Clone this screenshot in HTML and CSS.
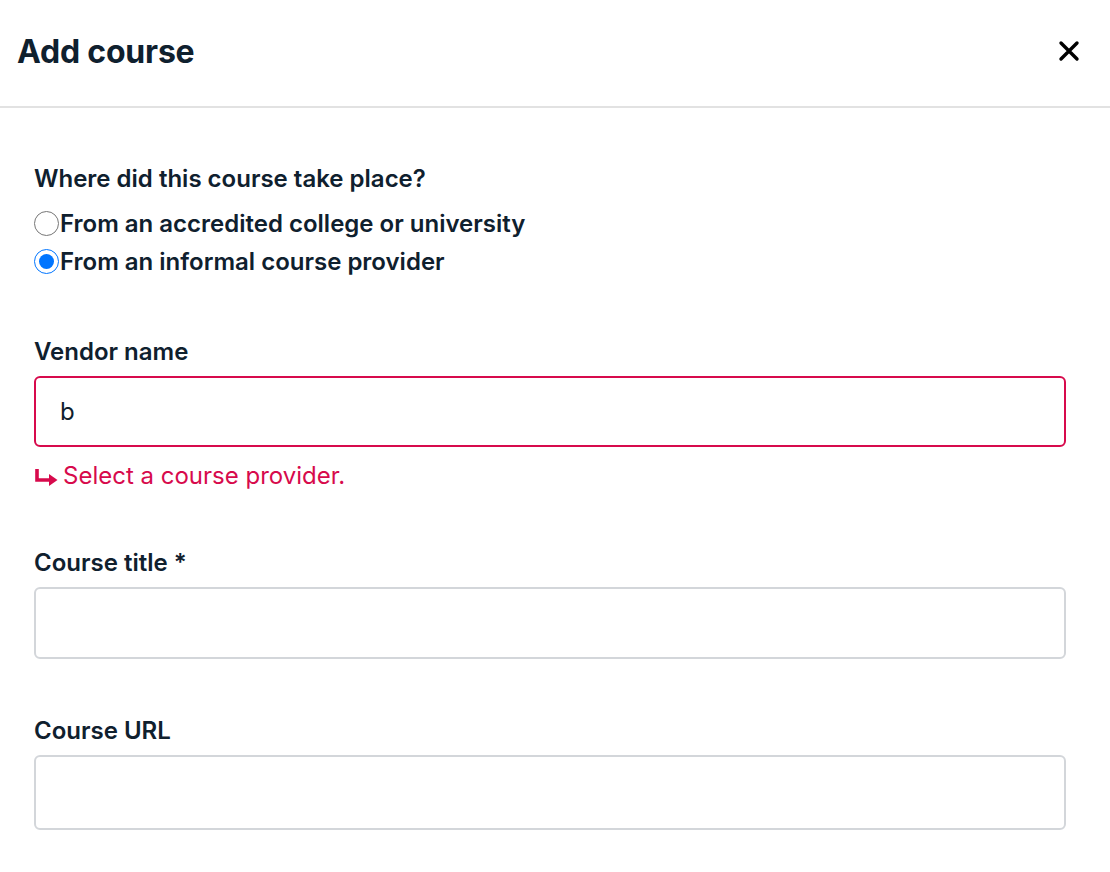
FILE: index.html
```html
<!DOCTYPE html>
<html lang="en">
<head>
    <meta charset="UTF-8">
    <meta name="viewport" content="width=device-width, initial-scale=1.0">
    <title>Add course</title>
    <link rel="stylesheet" href="styles.css">
</head>
<body>
    <div class="modal">
        <div class="modal-header">
            <h1>Add course</h1>
            <button class="close-btn" aria-label="Close">
                <svg width="22" height="22" viewBox="0 0 22 22">
                    <path d="M3 3 L19 19 M19 3 L3 19" stroke="#000" stroke-width="3.4" stroke-linecap="round"/>
                </svg>
            </button>
        </div>

        <div class="modal-body">
            <fieldset class="place-group">
                <legend>Where did this course take place?</legend>
                <label class="radio-row">
                    <input type="radio" name="place" value="college">
                    <span>From an accredited college or university</span>
                </label>
                <label class="radio-row">
                    <input type="radio" name="place" value="informal" checked>
                    <span>From an informal course provider</span>
                </label>
            </fieldset>

            <div class="form-group">
                <label for="vendor">Vendor name</label>
                <input type="text" id="vendor" class="invalid" value="b">
                <div class="error">
                    <svg width="25" height="20" viewBox="0 0 25 20">
                        <path d="M3 2 V13 H16" fill="none" stroke="#d70a4c" stroke-width="3.6"/>
                        <path d="M15 7 L23.5 13 L15 19 Z" fill="#d70a4c"/>
                    </svg>
                    <span>Select a course provider.</span>
                </div>
            </div>

            <div class="form-group">
                <label for="title">Course title *</label>
                <input type="text" id="title">
            </div>

            <div class="form-group">
                <label for="url">Course URL</label>
                <input type="text" id="url" class="tall">
            </div>
        </div>
    </div>
</body>
</html>
```

FILE: styles.css
```css
body {
    font-family: Inter, "Noto Sans", sans-serif;
    margin: 0;
    background-color: white;
    color: #0f202e;
}

.modal {
    width: 1110px;
}

.modal-header {
    display: flex;
    justify-content: space-between;
    align-items: center;
    height: 108px;
    box-sizing: border-box;
    padding: 0 30px 4px 17px;
    border-bottom: 2px solid #e2e2e2;
}

.modal-header h1 {
    margin: 0;
    font-size: 32px;
    font-weight: 700;
    letter-spacing: -0.2px;
}

.close-btn {
    background: none;
    border: none;
    padding: 0;
    cursor: pointer;
    display: flex;
}

.modal-body {
    padding: 56px 44px 40px 34px;
}

.place-group {
    border: none;
    margin: 0;
    padding: 0;
}

.place-group legend {
    padding: 0;
    font-size: 24px;
    font-weight: 600;
    line-height: 30px;
    margin-bottom: 10px;
}

.radio-row {
    display: flex;
    align-items: center;
    height: 38px;
    font-size: 24px;
    font-weight: 600;
    cursor: pointer;
}

.radio-row input {
    width: 25px;
    height: 25px;
    margin: 0 1px 0 0;
}

.form-group {
    margin-top: 57px;
}

.form-group label {
    display: block;
    font-size: 24px;
    font-weight: 600;
    line-height: 30px;
    margin-bottom: 9px;
}

.form-group input {
    display: block;
    width: 100%;
    height: 72px;
    box-sizing: border-box;
    padding: 0 24px;
    border: 2px solid #d3d6da;
    border-radius: 6px;
    font-family: inherit;
    font-size: 24px;
    color: #0f202e;
    outline: none;
}

.form-group input.invalid {
    height: 71px;
    border-color: #d70a4c;
}

.form-group input.tall {
    height: 75px;
}

.error {
    display: flex;
    align-items: center;
    gap: 4px;
    margin-top: 14px;
    color: #d70a4c;
    font-size: 24px;
    line-height: 30px;
}

.error svg {
    margin-top: 2px;
}
```
